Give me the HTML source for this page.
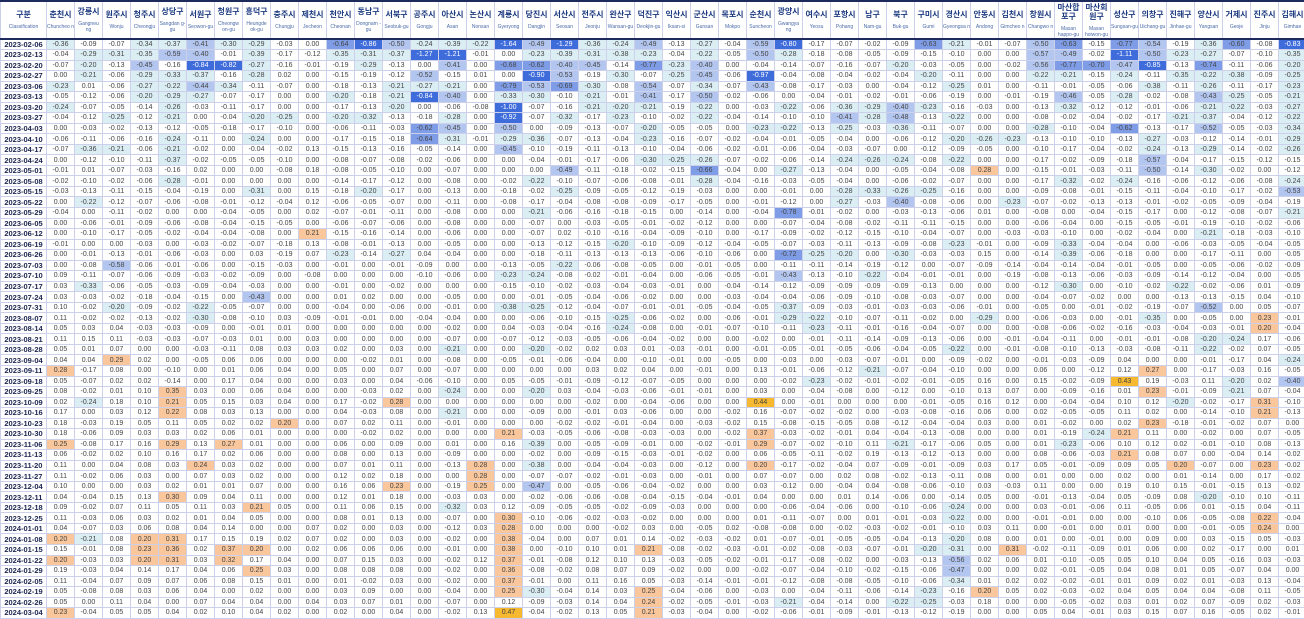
<!DOCTYPE html>
<html><head><meta charset="utf-8">
<style>
html,body{margin:0;padding:0;background:#fff;width:1304px;height:619px;overflow:hidden}
table{border-collapse:collapse;table-layout:fixed;width:1306px;font-family:"Liberation Sans","Noto Sans CJK KR",sans-serif;border-top:2px solid #1c2b5c}
td,th{padding:0;text-align:center;overflow:hidden;white-space:nowrap;border:1px solid #cdd0ea}
thead th{height:36px;vertical-align:middle;border-bottom:2px solid #1c2b5c;font-weight:bold;color:#1c3a80;font-size:8px;line-height:9px;white-space:normal}
thead th small{display:block;font-weight:normal;font-size:5px;line-height:6px;color:#4a6aa8;margin-top:5px}
tbody tr{height:10.54px}
tbody th{font-size:7.5px;font-weight:bold;color:#1c2550;line-height:9px}
tbody td{font-size:7px;color:#444;line-height:9px;font-family:"Liberation Sans Narrow","Liberation Sans",sans-serif}
.b1{background:#dbeef4}.b2{background:#b3c6ef}.b3{background:#7f9de6}.b4{background:#3f6cdb;color:#fff}
.o1{background:#f9c79b}.o2{background:#f6b92f}
</style></head><body>
<table>
<colgroup><col style="width:46px"><col span="45" style="width:28px"></colgroup>
<thead><tr>
<th>구분<small>Classification</small></th>
<th>춘천시<small>Chuncheo n</small></th><th>강릉시<small>Gangneu ng</small></th><th>원주시<small>Wonju</small></th><th>청주시<small>Cheongju</small></th><th>상당구<small>Sangdan g-gu</small></th><th>서원구<small>Seowon-gu</small></th><th>청원구<small>Cheongw on-gu</small></th><th>흥덕구<small>Heungde ok-gu</small></th><th>충주시<small>Chungju</small></th><th>제천시<small>Jecheon</small></th><th>천안시<small>Cheonan</small></th><th>동남구<small>Dongnam -gu</small></th><th>서북구<small>Seobuk-gu</small></th><th>공주시<small>Gongju</small></th><th>아산시<small>Asan</small></th><th>논산시<small>Nonsan</small></th><th>계룡시<small>Gyeryong</small></th><th>당진시<small>Dangjin</small></th><th>서산시<small>Seosan</small></th><th>전주시<small>Jeonju</small></th><th>완산구<small>Wansan-gu</small></th><th>덕진구<small>Deokjin-gu</small></th><th>익산시<small>Iksan-si</small></th><th>군산시<small>Gunsan</small></th><th>목포시<small>Mokpo</small></th><th>순천시<small>Suncheon</small></th><th>광양시<small>Gwangya ng</small></th><th>여수시<small>Yeosu</small></th><th>포항시<small>Pohang</small></th><th>남구<small>Nam-gu</small></th><th>북구<small>Buk-gu</small></th><th>구미시<small>Gumi</small></th><th>경산시<small>Gyeongsa n</small></th><th>안동시<small>Andong</small></th><th>김천시<small>Gimcheo n</small></th><th>창원시<small>Changwo n</small></th><th>마산합포구<small>Masan happo-gu</small></th><th>마산회원구<small>Masan hoiwon-gu</small></th><th>성산구<small>Sungsan-gu</small></th><th>의창구<small>Uichang-gu</small></th><th>진해구<small>Jinhae-gu</small></th><th>양산시<small>Yangsan</small></th><th>거제시<small>Geoje</small></th><th>진주시<small>Jinju</small></th><th>김해시<small>Gimhae</small></th>
</tr></thead>
<tbody>
<tr><th>2023-02-06<td>-0.36<td>-0.09<td>-0.07<td>-0.34<td>-0.37<td>-0.41<td>-0.30<td>-0.29<td>-0.03<td>0.00<td>-0.64<td>-0.86<td>-0.50<td>-0.24<td>-0.39<td>-0.22<td>-1.64<td>-0.49<td>-1.29<td>-0.36<td>-0.24<td>-0.49<td>-0.13<td>-0.27<td>-0.04<td>-0.59<td>-0.80<td>-0.17<td>-0.07<td>-0.02<td>-0.09<td>-0.63<td>-0.21<td>-0.01<td>-0.07<td>-0.50<td>-0.63<td>-0.15<td>-0.77<td>-0.54<td>-0.19<td>-0.36<td>-0.60<td>-0.08<td>-0.83</tr>
<tr><th>2023-02-13<td>-0.04<td>-0.29<td>-0.31<td>-0.35<td>-0.59<td>-0.40<td>-0.01<td>-0.39<td>-0.17<td>-0.12<td>-0.35<td>-0.31<td>-0.37<td>-1.27<td>-1.21<td>-0.01<td>0.00<td>-0.23<td>-0.39<td>-0.31<td>-0.38<td>-0.23<td>-0.04<td>-0.22<td>-0.05<td>-0.50<td>-0.28<td>-0.18<td>-0.08<td>-0.05<td>-0.09<td>-0.15<td>-0.10<td>0.00<td>0.00<td>-0.57<td>-0.49<td>-0.02<td>-1.11<td>-0.50<td>-0.23<td>-0.27<td>-0.07<td>-0.10<td>-0.35</tr>
<tr><th>2023-02-20<td>-0.07<td>-0.20<td>-0.13<td>-0.45<td>-0.16<td>-0.84<td>-0.82<td>-0.27<td>-0.16<td>-0.01<td>-0.19<td>-0.29<td>-0.13<td>0.00<td>-0.41<td>0.00<td>-0.68<td>-0.62<td>-0.40<td>-0.45<td>-0.14<td>-0.77<td>-0.23<td>-0.40<td>0.00<td>-0.04<td>-0.14<td>-0.07<td>-0.16<td>-0.07<td>-0.20<td>-0.03<td>-0.05<td>0.00<td>-0.02<td>-0.56<td>-0.77<td>-0.70<td>-0.47<td>-0.85<td>-0.13<td>-0.74<td>-0.11<td>-0.06<td>-0.20</tr>
<tr><th>2023-02-27<td>0.00<td>-0.21<td>-0.06<td>-0.29<td>-0.33<td>-0.37<td>-0.16<td>-0.28<td>0.02<td>0.00<td>-0.15<td>-0.19<td>-0.12<td>-0.52<td>-0.15<td>0.01<td>0.00<td>-0.90<td>-0.53<td>-0.19<td>-0.30<td>-0.07<td>-0.25<td>-0.45<td>-0.06<td>-0.97<td>-0.04<td>-0.08<td>-0.04<td>-0.02<td>-0.04<td>-0.20<td>-0.11<td>0.00<td>0.00<td>-0.22<td>-0.21<td>-0.15<td>-0.24<td>-0.11<td>-0.35<td>-0.22<td>-0.38<td>-0.09<td>-0.25</tr>
<tr><th>2023-03-06<td>-0.23<td>0.01<td>-0.06<td>-0.27<td>-0.22<td>-0.44<td>-0.34<td>-0.11<td>-0.07<td>0.00<td>-0.18<td>-0.13<td>-0.21<td>-0.27<td>-0.21<td>0.00<td>-0.79<td>-0.53<td>-0.69<td>-0.30<td>-0.08<td>-0.54<td>-0.07<td>-0.34<td>-0.07<td>-0.43<td>-0.08<td>-0.17<td>-0.03<td>0.00<td>-0.04<td>-0.12<td>-0.25<td>0.01<td>0.00<td>-0.11<td>-0.01<td>-0.05<td>-0.06<td>-0.38<td>-0.11<td>-0.26<td>-0.11<td>-0.17<td>-0.23</tr>
<tr><th>2023-03-13<td>-0.05<td>-0.12<td>-0.06<td>-0.20<td>-0.29<td>-0.27<td>-0.07<td>-0.17<td>0.00<td>0.00<td>-0.20<td>-0.18<td>-0.21<td>-0.84<td>-0.40<td>0.00<td>-0.33<td>-0.30<td>-0.10<td>-0.21<td>-0.01<td>-0.41<td>-0.17<td>-0.50<td>-0.02<td>-0.06<td>0.00<td>-0.04<td>-0.01<td>-0.02<td>-0.01<td>-0.06<td>-0.19<td>0.00<td>-0.01<td>-0.19<td>-0.46<td>-0.05<td>-0.28<td>-0.02<td>-0.08<td>-0.43<td>-0.25<td>-0.05<td>-0.21</tr>
<tr><th>2023-03-20<td>-0.24<td>-0.07<td>-0.05<td>-0.14<td>-0.26<td>-0.03<td>-0.11<td>-0.17<td>0.00<td>0.00<td>-0.17<td>-0.13<td>-0.20<td>0.00<td>-0.06<td>-0.08<td>-1.00<td>-0.07<td>-0.16<td>-0.21<td>-0.20<td>-0.21<td>-0.19<td>-0.22<td>0.00<td>-0.03<td>-0.22<td>-0.06<td>-0.36<td>-0.29<td>-0.40<td>-0.23<td>-0.16<td>-0.03<td>0.00<td>-0.13<td>-0.32<td>-0.12<td>-0.12<td>-0.01<td>-0.06<td>-0.21<td>-0.22<td>-0.03<td>-0.27</tr>
<tr><th>2023-03-27<td>-0.04<td>-0.12<td>-0.25<td>-0.12<td>-0.21<td>0.00<td>-0.04<td>-0.20<td>-0.25<td>0.00<td>-0.20<td>-0.32<td>-0.13<td>-0.18<td>-0.28<td>0.00<td>-0.92<td>-0.07<td>-0.32<td>-0.17<td>-0.23<td>-0.10<td>-0.02<td>-0.22<td>-0.04<td>-0.14<td>-0.10<td>-0.10<td>-0.41<td>-0.28<td>-0.48<td>-0.13<td>-0.22<td>0.00<td>0.00<td>-0.08<td>-0.02<td>-0.04<td>-0.02<td>-0.17<td>-0.21<td>-0.37<td>-0.04<td>-0.12<td>-0.22</tr>
<tr><th>2023-04-03<td>0.00<td>-0.03<td>-0.02<td>-0.13<td>-0.12<td>-0.05<td>-0.18<td>-0.17<td>-0.10<td>0.00<td>-0.06<td>-0.11<td>-0.03<td>-0.62<td>-0.45<td>0.00<td>-0.50<td>0.00<td>-0.09<td>-0.13<td>-0.07<td>-0.20<td>-0.05<td>-0.05<td>0.00<td>-0.23<td>-0.22<td>-0.13<td>-0.25<td>-0.03<td>-0.36<td>-0.11<td>-0.07<td>0.00<td>0.00<td>-0.28<td>-0.10<td>-0.04<td>-0.62<td>-0.13<td>-0.17<td>-0.52<td>-0.05<td>-0.03<td>-0.34</tr>
<tr><th>2023-04-10<td>-0.06<td>-0.11<td>-0.06<td>-0.16<td>-0.24<td>-0.11<td>0.00<td>-0.24<td>0.00<td>0.00<td>-0.17<td>-0.15<td>-0.18<td>-0.64<td>-0.31<td>-0.01<td>-0.29<td>-0.36<td>-0.07<td>-0.13<td>-0.04<td>-0.23<td>-0.16<td>-0.07<td>-0.02<td>-0.04<td>-0.01<td>-0.05<td>-0.04<td>0.00<td>-0.06<td>-0.12<td>-0.20<td>-0.26<td>-0.23<td>-0.13<td>-0.10<td>-0.10<td>-0.13<td>-0.27<td>-0.03<td>-0.12<td>-0.14<td>-0.01<td>-0.29</tr>
<tr><th>2023-04-17<td>-0.07<td>-0.36<td>-0.21<td>-0.06<td>-0.21<td>-0.02<td>0.00<td>-0.04<td>-0.02<td>0.13<td>-0.15<td>-0.13<td>-0.16<td>-0.05<td>-0.14<td>0.00<td>-0.45<td>-0.10<td>-0.19<td>-0.11<td>-0.13<td>-0.10<td>-0.04<td>-0.06<td>-0.02<td>-0.01<td>-0.06<td>-0.04<td>-0.03<td>-0.07<td>0.00<td>-0.12<td>-0.09<td>-0.05<td>0.00<td>-0.10<td>-0.17<td>-0.04<td>-0.02<td>-0.24<td>-0.13<td>-0.29<td>-0.14<td>-0.02<td>-0.26</tr>
<tr><th>2023-04-24<td>0.00<td>-0.12<td>-0.10<td>-0.11<td>-0.37<td>-0.02<td>-0.05<td>-0.05<td>-0.10<td>0.00<td>-0.08<td>-0.07<td>-0.08<td>-0.02<td>-0.06<td>0.00<td>0.00<td>-0.04<td>-0.01<td>-0.17<td>-0.06<td>-0.30<td>-0.25<td>-0.26<td>-0.07<td>-0.02<td>-0.06<td>-0.14<td>-0.24<td>-0.26<td>-0.24<td>-0.08<td>-0.22<td>0.00<td>0.00<td>-0.17<td>-0.02<td>-0.09<td>-0.18<td>-0.57<td>-0.04<td>-0.17<td>-0.15<td>-0.12<td>-0.15</tr>
<tr><th>2023-05-01<td>-0.01<td>0.01<td>-0.07<td>-0.03<td>-0.16<td>0.02<td>0.00<td>0.00<td>-0.08<td>0.18<td>-0.08<td>-0.05<td>-0.10<td>0.00<td>-0.07<td>0.00<td>0.00<td>0.00<td>-0.49<td>-0.11<td>-0.18<td>-0.02<td>-0.15<td>-0.66<td>-0.04<td>0.00<td>-0.27<td>-0.13<td>-0.04<td>0.00<td>-0.05<td>-0.04<td>-0.08<td>0.28<td>0.00<td>-0.15<td>-0.01<td>-0.03<td>-0.11<td>-0.50<td>-0.14<td>-0.30<td>-0.02<td>0.00<td>-0.12</tr>
<tr><th>2023-05-08<td>-0.02<td>-0.10<td>-0.02<td>-0.06<td>-0.28<td>-0.01<td>0.00<td>0.00<td>0.00<td>0.00<td>-0.14<td>-0.17<td>-0.12<td>0.00<td>-0.08<td>0.00<td>-0.02<td>-0.22<td>-0.10<td>-0.07<td>-0.06<td>-0.08<td>-0.01<td>-0.28<td>-0.04<td>-0.16<td>-0.03<td>-0.05<td>-0.04<td>0.00<td>-0.06<td>-0.02<td>-0.07<td>0.00<td>0.00<td>-0.17<td>-0.32<td>-0.02<td>-0.24<td>-0.16<td>-0.06<td>-0.12<td>-0.06<td>-0.08<td>-0.24</tr>
<tr><th>2023-05-15<td>-0.03<td>-0.13<td>-0.11<td>-0.15<td>-0.04<td>-0.19<td>0.00<td>-0.31<td>0.00<td>0.15<td>-0.18<td>-0.20<td>-0.17<td>0.00<td>-0.13<td>0.00<td>-0.18<td>-0.02<td>-0.25<td>-0.09<td>-0.05<td>-0.12<td>-0.19<td>-0.03<td>0.00<td>0.00<td>-0.01<td>0.00<td>-0.28<td>-0.33<td>-0.26<td>-0.25<td>-0.16<td>0.00<td>0.00<td>-0.09<td>-0.08<td>-0.01<td>-0.15<td>-0.11<td>-0.04<td>-0.10<td>-0.17<td>-0.02<td>-0.53</tr>
<tr><th>2023-05-22<td>0.00<td>-0.22<td>-0.12<td>-0.07<td>-0.06<td>-0.08<td>-0.01<td>-0.12<td>-0.04<td>0.12<td>-0.06<td>-0.05<td>-0.07<td>0.00<td>-0.11<td>0.00<td>-0.08<td>-0.17<td>-0.04<td>-0.08<td>-0.08<td>-0.09<td>-0.17<td>-0.05<td>0.00<td>-0.01<td>-0.12<td>0.00<td>-0.27<td>-0.03<td>-0.40<td>-0.08<td>-0.06<td>0.00<td>-0.23<td>-0.07<td>-0.02<td>-0.13<td>-0.13<td>-0.01<td>-0.02<td>-0.05<td>-0.09<td>-0.04<td>-0.19</tr>
<tr><th>2023-05-29<td>-0.04<td>0.00<td>-0.11<td>-0.02<td>0.00<td>0.00<td>-0.04<td>-0.05<td>0.00<td>0.02<td>-0.07<td>-0.01<td>-0.11<td>0.00<td>-0.08<td>0.00<td>0.00<td>-0.21<td>-0.06<td>-0.16<td>-0.18<td>-0.15<td>0.00<td>-0.14<td>0.00<td>-0.04<td>-0.78<td>-0.01<td>-0.02<td>0.00<td>-0.03<td>-0.13<td>-0.06<td>0.01<td>0.00<td>-0.08<td>0.00<td>-0.04<td>-0.15<td>-0.17<td>0.00<td>-0.12<td>-0.08<td>-0.07<td>-0.21</tr>
<tr><th>2023-06-05<td>0.00<td>-0.06<td>-0.01<td>-0.09<td>-0.06<td>-0.08<td>-0.04<td>-0.15<td>-0.05<td>0.00<td>-0.06<td>-0.07<td>-0.06<td>0.00<td>-0.08<td>0.00<td>0.00<td>-0.07<td>0.00<td>-0.03<td>-0.05<td>-0.01<td>-0.02<td>-0.12<td>0.00<td>0.00<td>-0.07<td>-0.04<td>-0.08<td>-0.02<td>-0.11<td>-0.11<td>-0.15<td>0.00<td>0.00<td>-0.06<td>-0.04<td>0.00<td>-0.15<td>-0.05<td>-0.01<td>-0.19<td>-0.10<td>-0.02<td>-0.06</tr>
<tr><th>2023-06-12<td>0.00<td>-0.10<td>-0.17<td>-0.05<td>-0.02<td>-0.04<td>-0.04<td>-0.08<td>0.00<td>0.21<td>-0.15<td>-0.16<td>-0.14<td>0.00<td>-0.06<td>0.00<td>0.00<td>-0.07<td>0.02<td>-0.10<td>-0.16<td>-0.04<td>-0.09<td>-0.10<td>0.00<td>-0.17<td>-0.09<td>-0.02<td>-0.12<td>-0.15<td>-0.10<td>-0.04<td>-0.07<td>0.00<td>-0.03<td>-0.03<td>-0.10<td>0.00<td>-0.02<td>-0.04<td>0.00<td>-0.21<td>-0.18<td>-0.03<td>-0.10</tr>
<tr><th>2023-06-19<td>-0.01<td>0.00<td>0.00<td>-0.03<td>0.00<td>-0.03<td>-0.02<td>-0.07<td>-0.18<td>0.13<td>-0.08<td>-0.01<td>-0.13<td>0.00<td>-0.05<td>0.00<td>0.00<td>-0.13<td>-0.12<td>-0.15<td>-0.20<td>-0.10<td>-0.09<td>-0.12<td>-0.04<td>-0.05<td>-0.07<td>-0.03<td>-0.11<td>-0.13<td>-0.09<td>-0.08<td>-0.23<td>-0.01<td>0.00<td>-0.09<td>-0.33<td>-0.04<td>-0.04<td>0.00<td>-0.06<td>-0.03<td>-0.05<td>-0.04<td>-0.05</tr>
<tr><th>2023-06-26<td>0.00<td>-0.01<td>-0.13<td>-0.01<td>-0.06<td>-0.03<td>0.00<td>0.03<td>-0.19<td>0.07<td>-0.23<td>-0.14<td>-0.27<td>0.04<td>-0.04<td>0.00<td>0.00<td>-0.18<td>-0.11<td>-0.13<td>-0.13<td>-0.13<td>-0.06<td>-0.10<td>-0.06<td>0.00<td>-0.72<td>-0.25<td>-0.20<td>0.00<td>-0.30<td>-0.03<td>-0.03<td>0.15<td>0.00<td>-0.14<td>-0.39<td>-0.06<td>-0.18<td>0.00<td>0.00<td>-0.17<td>-0.11<td>0.00<td>-0.05</tr>
<tr><th>2023-07-03<td>0.00<td>-0.08<td>-0.58<td>-0.06<td>-0.01<td>-0.06<td>0.00<td>-0.15<td>-0.03<td>0.00<td>-0.01<td>0.00<td>-0.01<td>-0.09<td>0.00<td>0.00<td>-0.13<td>-0.05<td>-0.22<td>-0.06<td>-0.08<td>-0.05<td>0.00<td>-0.01<td>-0.05<td>0.00<td>-0.11<td>-0.11<td>-0.14<td>-0.19<td>-0.12<td>0.00<td>-0.07<td>-0.09<td>-0.14<td>-0.04<td>-0.14<td>-0.04<td>-0.01<td>-0.05<td>0.00<td>-0.05<td>-0.06<td>-0.02<td>-0.09</tr>
<tr><th>2023-07-10<td>0.09<td>-0.11<td>-0.07<td>-0.06<td>-0.09<td>-0.03<td>-0.02<td>-0.09<td>0.00<td>-0.08<td>0.00<td>0.00<td>0.00<td>-0.10<td>-0.06<td>0.00<td>-0.23<td>-0.24<td>-0.08<td>-0.02<td>-0.01<td>-0.04<td>0.00<td>-0.06<td>-0.05<td>-0.01<td>-0.43<td>-0.13<td>-0.10<td>-0.22<td>-0.04<td>-0.01<td>-0.01<td>0.00<td>-0.19<td>-0.08<td>-0.13<td>-0.06<td>-0.03<td>-0.09<td>-0.14<td>-0.12<td>-0.04<td>0.00<td>-0.05</tr>
<tr><th>2023-07-17<td>0.03<td>-0.33<td>-0.06<td>-0.05<td>-0.03<td>-0.09<td>-0.04<td>-0.03<td>0.00<td>0.00<td>-0.01<td>0.00<td>-0.02<td>0.00<td>0.00<td>0.00<td>-0.15<td>-0.10<td>-0.02<td>-0.03<td>-0.04<td>-0.03<td>-0.01<td>0.00<td>-0.04<td>-0.14<td>-0.12<td>-0.09<td>-0.09<td>-0.09<td>-0.09<td>-0.13<td>0.00<td>0.00<td>0.00<td>-0.12<td>-0.30<td>0.00<td>-0.10<td>-0.02<td>-0.22<td>-0.02<td>-0.06<td>0.01<td>-0.09</tr>
<tr><th>2023-07-24<td>0.03<td>-0.03<td>-0.02<td>-0.18<td>-0.04<td>-0.15<td>0.00<td>-0.43<td>0.00<td>0.00<td>0.01<td>0.02<td>0.00<td>0.00<td>-0.05<td>0.00<td>0.00<td>-0.01<td>-0.05<td>-0.04<td>-0.06<td>-0.02<td>0.00<td>0.00<td>-0.03<td>-0.04<td>-0.04<td>-0.06<td>-0.09<td>-0.10<td>-0.08<td>-0.03<td>-0.07<td>0.00<td>0.00<td>-0.04<td>-0.07<td>-0.02<td>0.00<td>0.00<td>-0.13<td>-0.13<td>-0.15<td>0.04<td>-0.10</tr>
<tr><th>2023-07-31<td>0.10<td>-0.02<td>-0.20<td>-0.09<td>-0.02<td>-0.22<td>-0.05<td>-0.07<td>0.00<td>0.00<td>-0.04<td>0.00<td>-0.06<td>0.00<td>-0.01<td>0.00<td>-0.38<td>-0.25<td>-0.12<td>-0.04<td>-0.07<td>-0.01<td>-0.01<td>-0.05<td>-0.04<td>-0.05<td>-0.37<td>-0.09<td>-0.03<td>-0.01<td>-0.03<td>-0.03<td>-0.06<td>-0.01<td>0.00<td>-0.05<td>0.00<td>-0.01<td>-0.02<td>-0.19<td>-0.07<td>-0.52<td>0.00<td>0.05<td>-0.07</tr>
<tr><th>2023-08-07<td>0.11<td>-0.02<td>-0.02<td>-0.13<td>-0.02<td>-0.30<td>-0.08<td>-0.10<td>0.03<td>-0.09<td>-0.01<td>-0.01<td>0.00<td>-0.04<td>-0.04<td>0.00<td>0.00<td>-0.06<td>-0.10<td>-0.15<td>-0.25<td>-0.06<td>-0.02<td>0.00<td>-0.06<td>-0.01<td>-0.29<td>-0.22<td>-0.10<td>-0.07<td>-0.11<td>-0.02<td>0.00<td>-0.29<td>0.00<td>-0.06<td>-0.03<td>0.00<td>-0.01<td>-0.35<td>0.00<td>-0.05<td>0.00<td>0.23<td>-0.01</tr>
<tr><th>2023-08-14<td>0.05<td>0.03<td>0.04<td>-0.03<td>-0.03<td>-0.09<td>0.00<td>-0.01<td>0.01<td>0.00<td>0.00<td>0.00<td>0.00<td>0.00<td>-0.02<td>0.00<td>0.04<td>-0.03<td>-0.04<td>-0.16<td>-0.24<td>-0.08<td>0.00<td>-0.01<td>-0.07<td>-0.10<td>-0.11<td>-0.23<td>-0.11<td>-0.01<td>-0.16<td>-0.04<td>-0.07<td>0.00<td>0.00<td>-0.08<td>-0.06<td>-0.02<td>-0.16<td>-0.03<td>-0.04<td>-0.03<td>-0.01<td>0.20<td>-0.04</tr>
<tr><th>2023-08-21<td>0.11<td>0.15<td>0.11<td>-0.03<td>-0.03<td>-0.07<td>-0.03<td>0.01<td>0.00<td>0.03<td>0.00<td>0.00<td>0.00<td>0.00<td>-0.07<td>0.00<td>-0.07<td>-0.12<td>-0.03<td>-0.05<td>-0.06<td>-0.04<td>-0.02<td>0.00<td>0.00<td>-0.02<td>0.00<td>-0.01<td>-0.11<td>-0.14<td>-0.09<td>-0.13<td>-0.06<td>0.00<td>-0.01<td>-0.04<td>-0.11<td>0.00<td>-0.01<td>-0.01<td>-0.08<td>-0.20<td>-0.24<td>0.17<td>-0.06</tr>
<tr><th>2023-08-28<td>0.05<td>0.01<td>0.07<td>0.00<td>0.00<td>-0.03<td>-0.11<td>0.08<td>0.03<td>0.03<td>0.02<td>0.00<td>0.03<td>0.00<td>-0.21<td>0.00<td>0.00<td>-0.20<td>-0.02<td>0.02<td>0.03<td>0.01<td>-0.03<td>-0.01<td>0.00<td>-0.01<td>-0.05<td>-0.01<td>-0.05<td>-0.06<td>-0.04<td>-0.05<td>-0.22<td>0.00<td>-0.01<td>-0.08<td>-0.10<td>-0.13<td>-0.03<td>-0.08<td>-0.11<td>-0.22<td>-0.02<td>0.07<td>-0.05</tr>
<tr><th>2023-09-04<td>0.04<td>0.04<td>0.29<td>0.02<td>0.00<td>-0.05<td>0.06<td>0.06<td>0.00<td>0.00<td>0.00<td>-0.02<td>0.01<td>0.00<td>-0.08<td>0.00<td>-0.05<td>-0.01<td>-0.06<td>-0.04<td>0.00<td>-0.10<td>-0.01<td>0.00<td>-0.05<td>0.00<td>-0.03<td>0.00<td>-0.03<td>-0.07<td>-0.01<td>0.00<td>-0.09<td>-0.02<td>0.00<td>-0.01<td>-0.03<td>-0.09<td>0.04<td>0.00<td>0.00<td>-0.01<td>-0.17<td>0.04<td>-0.24</tr>
<tr><th>2023-09-11<td>0.28<td>-0.17<td>0.08<td>0.00<td>-0.10<td>0.00<td>0.01<td>0.06<td>0.04<td>0.00<td>0.05<td>0.00<td>0.07<td>0.00<td>-0.07<td>0.00<td>0.00<td>0.00<td>0.00<td>0.03<td>0.02<td>0.04<td>0.00<td>-0.01<td>0.00<td>0.13<td>-0.01<td>-0.06<td>-0.12<td>-0.21<td>-0.07<td>-0.04<td>-0.10<td>0.00<td>0.00<td>0.06<td>0.00<td>-0.12<td>0.12<td>0.27<td>0.00<td>-0.17<td>-0.03<td>0.16<td>-0.05</tr>
<tr><th>2023-09-18<td>0.05<td>-0.07<td>0.02<td>0.02<td>-0.14<td>0.00<td>0.17<td>0.04<td>0.00<td>0.00<td>0.03<td>0.00<td>0.04<td>-0.06<td>-0.10<td>0.00<td>0.05<td>-0.05<td>-0.01<td>-0.09<td>-0.12<td>-0.07<td>-0.05<td>0.00<td>0.00<td>0.00<td>-0.02<td>-0.23<td>-0.02<td>-0.01<td>-0.02<td>-0.01<td>-0.05<td>0.16<td>0.00<td>0.15<td>-0.02<td>-0.09<td>0.43<td>0.19<td>-0.03<td>0.11<td>-0.20<td>0.02<td>-0.40</tr>
<tr><th>2023-09-25<td>0.08<td>-0.02<td>0.01<td>0.10<td>0.35<td>0.03<td>0.00<td>0.06<td>0.04<td>0.00<td>0.00<td>-0.03<td>0.02<td>0.00<td>-0.24<td>0.00<td>0.00<td>-0.20<td>0.03<td>-0.04<td>-0.03<td>-0.06<td>-0.01<td>-0.01<td>0.00<td>0.03<td>0.00<td>-0.04<td>-0.08<td>0.00<td>-0.12<td>0.00<td>-0.10<td>0.13<td>0.07<td>0.00<td>-0.09<td>-0.16<td>0.01<td>0.23<td>-0.01<td>-0.09<td>-0.21<td>0.07<td>-0.04</tr>
<tr><th>2023-10-09<td>0.02<td>-0.24<td>0.18<td>0.10<td>0.21<td>0.05<td>0.15<td>0.03<td>0.04<td>0.00<td>0.17<td>-0.02<td>0.28<td>0.00<td>0.00<td>0.00<td>0.00<td>0.00<td>0.00<td>-0.02<td>0.00<td>-0.04<td>-0.06<td>0.00<td>0.00<td>0.44<td>0.00<td>-0.01<td>0.00<td>0.00<td>0.00<td>-0.01<td>-0.05<td>0.16<td>0.12<td>0.00<td>-0.04<td>-0.04<td>0.10<td>0.12<td>-0.20<td>-0.02<td>-0.17<td>0.31<td>-0.10</tr>
<tr><th>2023-10-16<td>0.17<td>0.00<td>0.03<td>0.12<td>0.22<td>0.08<td>0.03<td>0.13<td>0.00<td>0.00<td>0.04<td>-0.03<td>0.08<td>0.00<td>-0.21<td>0.00<td>0.00<td>-0.09<td>0.00<td>-0.01<td>0.03<td>-0.06<td>0.00<td>0.00<td>-0.02<td>0.16<td>-0.07<td>-0.02<td>-0.02<td>0.00<td>-0.03<td>-0.08<td>-0.16<td>0.06<td>0.00<td>0.02<td>-0.05<td>-0.05<td>0.11<td>0.02<td>0.00<td>-0.14<td>-0.10<td>0.21<td>-0.13</tr>
<tr><th>2023-10-23<td>0.18<td>-0.03<td>0.19<td>0.05<td>0.11<td>0.05<td>0.02<td>0.02<td>0.20<td>0.00<td>0.07<td>0.02<td>0.11<td>0.00<td>-0.01<td>0.00<td>0.00<td>0.00<td>-0.02<td>-0.02<td>-0.01<td>-0.04<td>0.00<td>-0.03<td>-0.02<td>0.15<td>-0.08<td>-0.15<td>-0.05<td>0.08<td>-0.12<td>-0.04<td>-0.04<td>0.03<td>0.00<td>0.01<td>-0.02<td>0.00<td>0.02<td>0.23<td>-0.18<td>-0.01<td>-0.02<td>0.07<td>0.00</tr>
<tr><th>2023-10-30<td>0.18<td>-0.06<td>0.09<td>0.03<td>0.03<td>0.02<td>0.06<td>0.01<td>0.00<td>0.00<td>0.00<td>-0.02<td>0.02<td>0.00<td>0.00<td>0.00<td>0.21<td>-0.03<td>-0.05<td>-0.06<td>-0.08<td>-0.03<td>-0.03<td>0.00<td>-0.02<td>0.37<td>-0.03<td>-0.02<td>-0.01<td>0.04<td>-0.04<td>-0.13<td>-0.08<td>0.00<td>0.00<td>0.01<td>-0.19<td>-0.24<td>0.21<td>0.11<td>0.00<td>-0.02<td>0.00<td>0.07<td>-0.05</tr>
<tr><th>2023-11-06<td>0.25<td>-0.08<td>0.17<td>0.16<td>0.29<td>0.13<td>0.27<td>0.01<td>0.00<td>0.00<td>0.06<td>0.00<td>0.09<td>0.00<td>0.01<td>0.00<td>0.16<td>-0.39<td>0.00<td>-0.05<td>-0.09<td>-0.01<td>0.00<td>-0.02<td>-0.01<td>0.29<td>-0.07<td>-0.02<td>-0.10<td>0.11<td>-0.21<td>-0.17<td>-0.06<td>0.05<td>0.00<td>0.01<td>-0.23<td>-0.06<td>0.10<td>0.12<td>0.02<td>-0.01<td>-0.10<td>0.08<td>-0.13</tr>
<tr><th>2023-11-13<td>0.06<td>-0.02<td>0.02<td>0.10<td>0.16<td>0.17<td>0.02<td>0.06<td>0.00<td>0.00<td>0.08<td>0.00<td>0.13<td>0.00<td>-0.09<td>0.00<td>0.00<td>-0.02<td>0.00<td>-0.09<td>-0.15<td>-0.03<td>-0.01<td>-0.02<td>0.00<td>0.06<td>-0.05<td>-0.11<td>-0.02<td>0.19<td>-0.13<td>-0.12<td>-0.13<td>0.00<td>0.00<td>0.08<td>-0.06<td>-0.03<td>0.21<td>0.08<td>0.07<td>0.00<td>-0.04<td>0.14<td>-0.02</tr>
<tr><th>2023-11-20<td>0.11<td>0.00<td>0.04<td>0.08<td>0.03<td>0.24<td>0.03<td>0.02<td>0.00<td>0.00<td>0.07<td>0.01<td>0.11<td>0.00<td>-0.13<td>0.28<td>0.00<td>-0.38<td>0.00<td>-0.04<td>-0.04<td>-0.03<td>0.00<td>-0.12<td>0.00<td>0.20<td>-0.17<td>-0.02<td>-0.04<td>0.07<td>-0.09<td>-0.01<td>-0.09<td>0.03<td>0.17<td>0.05<td>-0.01<td>-0.09<td>0.09<td>0.05<td>0.20<td>-0.07<td>0.00<td>0.23<td>-0.02</tr>
<tr><th>2023-11-27<td>0.11<td>-0.02<td>0.06<td>0.03<td>0.00<td>0.07<td>0.03<td>0.02<td>0.00<td>0.00<td>0.12<td>0.02<td>0.18<td>0.00<td>0.00<td>0.28<td>0.00<td>-0.07<td>-0.07<td>-0.02<td>-0.01<td>-0.03<td>0.00<td>-0.01<td>0.00<td>0.07<td>-0.07<td>0.00<td>0.02<td>0.08<td>-0.02<td>-0.13<td>-0.11<td>0.08<td>0.00<td>0.01<td>0.00<td>0.00<td>0.02<td>0.00<td>0.01<td>-0.14<td>0.00<td>0.17<td>-0.02</tr>
<tr><th>2023-12-04<td>0.10<td>0.00<td>0.00<td>0.03<td>0.02<td>0.01<td>0.01<td>0.07<td>0.00<td>0.00<td>0.16<td>0.06<td>0.23<td>0.00<td>-0.19<td>0.25<td>0.00<td>-0.47<td>0.00<td>-0.05<td>-0.06<td>-0.04<td>-0.02<td>0.00<td>0.00<td>0.03<td>-0.12<td>0.00<td>-0.04<td>0.04<td>-0.08<td>-0.06<td>-0.10<td>0.03<td>-0.03<td>0.11<td>0.00<td>0.00<td>0.19<td>0.10<td>0.15<td>-0.01<td>-0.15<td>0.13<td>-0.02</tr>
<tr><th>2023-12-11<td>0.04<td>-0.04<td>0.15<td>0.13<td>0.30<td>0.09<td>0.04<td>0.11<td>0.00<td>0.00<td>0.12<td>0.01<td>0.18<td>0.00<td>-0.03<td>0.03<td>0.00<td>-0.02<td>-0.06<td>-0.06<td>-0.08<td>-0.04<td>-0.15<td>-0.04<td>-0.01<td>0.04<td>0.00<td>0.00<td>0.01<td>0.14<td>-0.06<td>0.00<td>-0.14<td>0.05<td>0.00<td>-0.01<td>-0.13<td>-0.04<td>0.05<td>-0.09<td>0.08<td>-0.20<td>-0.10<td>0.10<td>-0.11</tr>
<tr><th>2023-12-18<td>0.09<td>-0.02<td>0.07<td>0.11<td>0.05<td>0.11<td>0.03<td>0.21<td>0.05<td>0.00<td>0.11<td>0.06<td>0.15<td>0.00<td>-0.32<td>0.03<td>0.12<td>-0.09<td>-0.05<td>-0.05<td>-0.02<td>-0.09<td>-0.03<td>0.00<td>0.00<td>0.00<td>-0.06<td>-0.04<td>-0.06<td>0.00<td>-0.10<td>-0.06<td>-0.24<td>0.00<td>0.00<td>0.03<td>-0.01<td>-0.06<td>0.11<td>-0.05<td>0.06<td>0.01<td>-0.15<td>0.04<td>-0.11</tr>
<tr><th>2023-12-25<td>0.11<td>-0.03<td>0.06<td>0.03<td>0.02<td>0.01<td>0.04<td>0.05<td>0.00<td>0.00<td>0.08<td>0.01<td>0.13<td>0.00<td>-0.07<td>0.00<td>0.30<td>-0.10<td>-0.06<td>-0.02<td>-0.03<td>-0.02<td>0.00<td>0.00<td>0.00<td>0.01<td>-0.11<td>-0.07<td>0.00<td>0.01<td>-0.01<td>-0.03<td>-0.22<td>0.00<td>0.00<td>-0.01<td>-0.01<td>0.00<td>0.00<td>-0.10<td>0.06<td>-0.05<td>-0.08<td>0.22<td>-0.04</tr>
<tr><th>2024-01-01<td>0.04<td>-0.07<td>0.03<td>0.06<td>0.08<td>0.04<td>0.14<td>0.00<td>0.00<td>0.07<td>0.02<td>0.00<td>0.03<td>0.00<td>-0.12<td>0.03<td>0.28<td>0.00<td>0.00<td>0.00<td>-0.02<td>0.03<td>0.00<td>-0.05<td>0.02<td>-0.08<td>-0.08<td>0.00<td>-0.02<td>-0.03<td>-0.02<td>-0.01<td>-0.10<td>0.03<td>0.11<td>0.00<td>-0.01<td>0.00<td>0.01<td>0.00<td>0.00<td>-0.01<td>-0.05<td>0.24<td>0.00</tr>
<tr><th>2024-01-08<td>0.20<td>-0.21<td>0.08<td>0.20<td>0.31<td>0.17<td>0.15<td>0.19<td>0.02<td>0.07<td>0.02<td>0.00<td>0.03<td>0.00<td>-0.02<td>0.00<td>0.38<td>-0.04<td>0.00<td>0.07<td>0.01<td>0.14<td>-0.02<td>-0.03<td>-0.02<td>0.01<td>-0.07<td>-0.01<td>-0.05<td>-0.05<td>-0.04<td>-0.13<td>-0.20<td>0.08<td>0.00<td>0.01<td>0.00<td>-0.01<td>0.00<td>0.09<td>0.00<td>0.03<td>-0.15<td>0.05<td>-0.03</tr>
<tr><th>2024-01-15<td>0.15<td>-0.01<td>0.08<td>0.23<td>0.36<td>0.02<td>0.37<td>0.20<td>0.00<td>0.02<td>0.06<td>0.06<td>0.06<td>0.00<td>-0.01<td>0.00<td>0.38<td>0.00<td>-0.10<td>0.10<td>0.01<td>0.21<td>-0.08<td>-0.02<td>-0.03<td>-0.01<td>-0.02<td>-0.08<td>-0.03<td>-0.07<td>-0.01<td>-0.20<td>-0.31<td>0.00<td>0.31<td>-0.02<td>-0.11<td>-0.09<td>0.01<td>0.06<td>0.00<td>0.02<td>-0.17<td>0.00<td>0.01</tr>
<tr><th>2024-01-22<td>0.20<td>-0.03<td>0.03<td>0.20<td>0.31<td>0.03<td>0.32<td>0.17<td>0.04<td>0.00<td>0.07<td>0.15<td>0.03<td>0.00<td>-0.02<td>0.12<td>0.37<td>-0.01<td>-0.08<td>0.12<td>0.10<td>0.13<td>-0.03<td>-0.05<td>-0.02<td>-0.01<td>-0.17<td>-0.08<td>-0.02<td>0.00<td>-0.03<td>-0.13<td>-0.56<td>0.02<td>0.06<td>0.01<td>-0.10<td>-0.05<td>0.05<td>0.10<td>0.04<td>0.05<td>-0.16<td>0.03<td>-0.03</tr>
<tr><th>2024-01-29<td>0.19<td>-0.03<td>0.04<td>0.14<td>0.17<td>0.04<td>0.06<td>0.25<td>0.03<td>0.00<td>0.08<td>0.08<td>0.08<td>0.00<td>-0.02<td>0.00<td>0.36<td>-0.08<td>-0.02<td>0.08<td>0.07<td>0.09<td>-0.02<td>0.00<td>0.00<td>-0.02<td>-0.07<td>-0.04<td>-0.10<td>-0.02<td>-0.15<td>-0.06<td>-0.47<td>0.00<td>0.00<td>0.02<td>-0.01<td>-0.05<td>0.04<td>0.08<td>0.01<td>0.05<td>-0.07<td>0.04<td>0.00</tr>
<tr><th>2024-02-05<td>0.11<td>-0.04<td>0.07<td>0.09<td>0.07<td>0.06<td>0.08<td>0.15<td>0.01<td>0.00<td>0.01<td>-0.02<td>0.03<td>0.00<td>-0.02<td>0.00<td>0.37<td>-0.01<td>0.00<td>0.11<td>0.16<td>0.05<td>-0.03<td>-0.14<td>-0.01<td>-0.01<td>-0.12<td>-0.08<td>-0.08<td>-0.05<td>-0.10<td>-0.06<td>-0.34<td>0.01<td>0.02<td>0.02<td>-0.02<td>-0.01<td>0.01<td>0.09<td>0.02<td>0.01<td>-0.03<td>0.13<td>-0.04</tr>
<tr><th>2024-02-19<td>0.05<td>-0.08<td>0.08<td>0.03<td>0.06<td>0.04<td>0.00<td>0.02<td>0.00<td>0.00<td>0.03<td>0.09<td>0.00<td>0.00<td>-0.04<td>0.00<td>0.25<td>-0.30<td>-0.04<td>0.14<td>0.03<td>0.25<td>-0.04<td>-0.06<td>0.00<td>-0.03<td>0.00<td>-0.04<td>-0.11<td>-0.06<td>-0.14<td>-0.23<td>-0.16<td>0.20<td>0.05<td>0.02<td>-0.03<td>-0.02<td>0.04<td>0.05<td>0.04<td>0.04<td>-0.08<td>0.11<td>-0.05</tr>
<tr><th>2024-02-26<td>0.05<td>0.00<td>0.11<td>0.04<td>0.00<td>0.07<td>0.04<td>0.04<td>0.00<td>0.04<td>0.03<td>0.07<td>0.01<td>0.00<td>-0.07<td>0.00<td>0.12<td>-0.09<td>-0.03<td>0.14<td>0.04<td>0.24<td>-0.02<td>-0.05<td>-0.01<td>-0.03<td>-0.21<td>-0.04<td>-0.14<td>0.00<td>-0.22<td>-0.25<td>-0.03<td>0.18<td>0.00<td>0.00<td>-0.05<td>-0.02<td>0.03<td>0.01<td>0.02<td>0.07<td>-0.09<td>0.02<td>-0.03</tr>
<tr><th>2024-03-04<td>0.23<td>-0.04<td>0.05<td>0.05<td>0.04<td>0.02<td>0.10<td>0.04<td>0.02<td>0.00<td>0.02<td>0.00<td>0.04<td>0.00<td>-0.02<td>0.13<td>0.47<td>-0.04<td>-0.02<td>0.13<td>0.05<td>0.21<td>-0.03<td>-0.04<td>0.00<td>-0.02<td>-0.06<td>-0.01<td>-0.09<td>-0.01<td>-0.13<td>-0.12<td>-0.19<td>0.00<td>0.00<td>0.05<td>0.04<td>-0.01<td>0.03<td>0.15<td>0.07<td>0.16<td>-0.05<td>0.02<td>-0.01</tr>
</tbody></table>
<script>
document.querySelectorAll('tbody td').forEach(function(c){var v=parseFloat(c.textContent);var k='';
if(v<=-0.8)k='b4';else if(v<=-0.6)k='b3';else if(v<=-0.4)k='b2';else if(v<=-0.2)k='b1';else if(v>=0.4)k='o2';else if(v>=0.2)k='o1';
if(k)c.className=k;});
</script>
</body></html>
